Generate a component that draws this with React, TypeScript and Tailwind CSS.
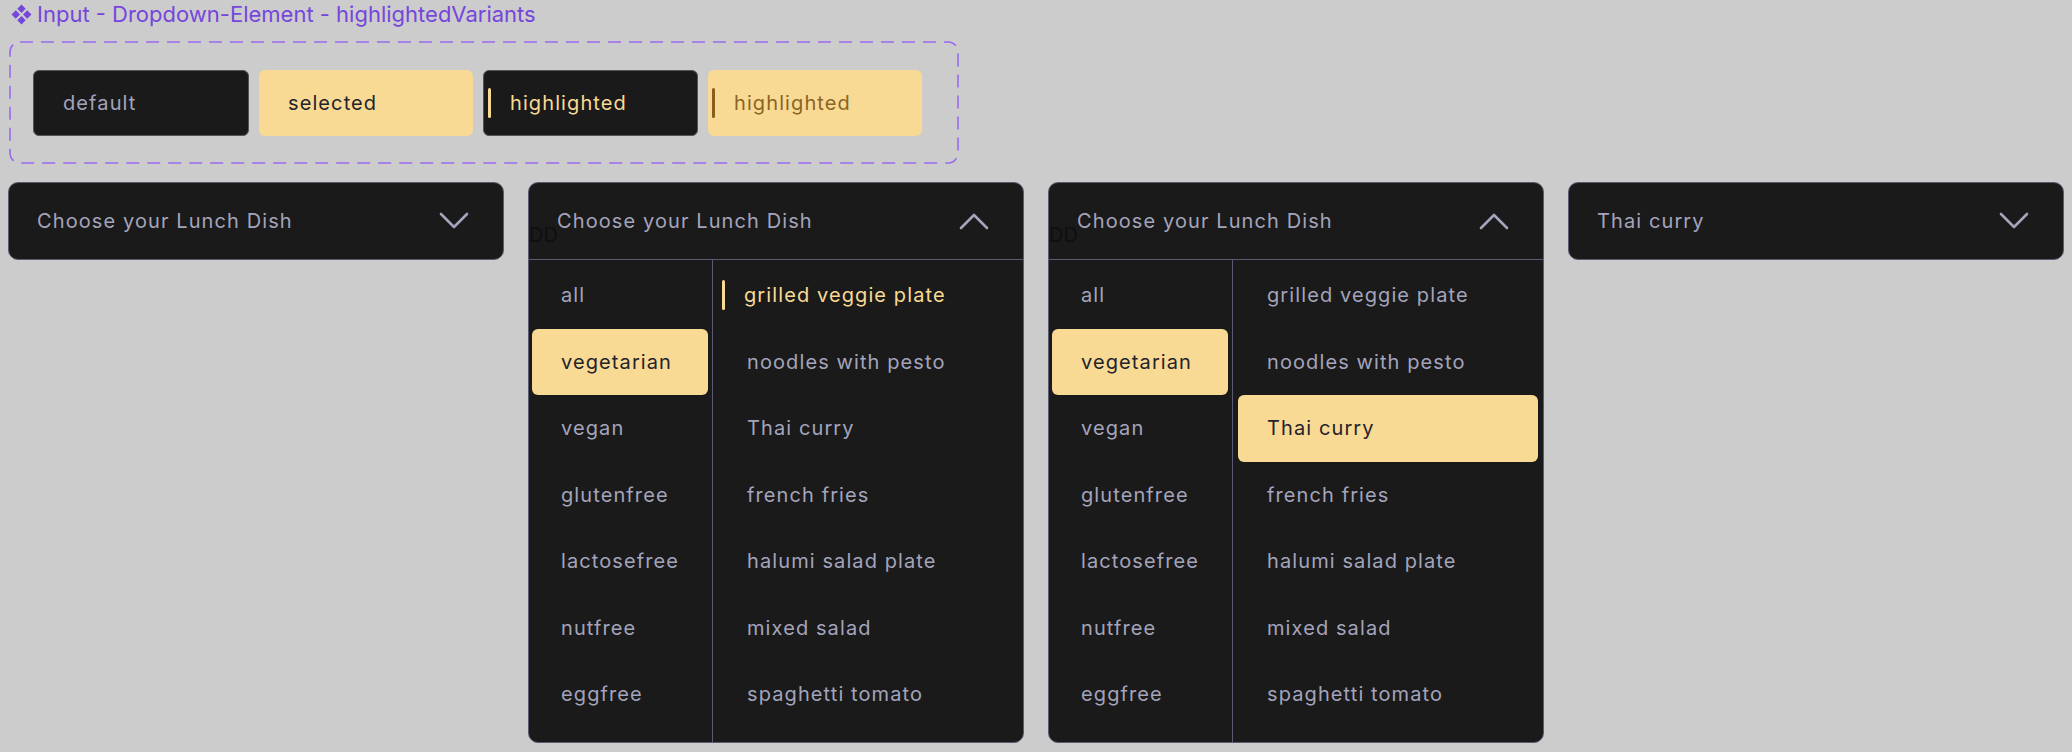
import React from 'react';

const FONT = "font-['Inter','Noto_Sans',sans-serif]";

const categories = ['all', 'vegetarian', 'vegan', 'glutenfree', 'lactosefree', 'nutfree', 'eggfree'];
const dishes = [
  'grilled veggie plate',
  'noodles with pesto',
  'Thai curry',
  'french fries',
  'halumi salad plate',
  'mixed salad',
  'spaghetti tomato',
];

type Variant = 'default' | 'selected' | 'highlighted' | 'highlightedSelected';

function Item({ label, variant, className = '' }: { label: string; variant: Variant; className?: string }) {
  if (variant === 'selected') {
    return (
      <div className={`flex items-center pl-[29px] rounded-[6px] bg-[#f9da94] text-[#23232b] ${className}`}>
        {label}
      </div>
    );
  }
  if (variant === 'highlighted') {
    return (
      <div className={`flex items-center pl-[4px] gap-[19px] text-[#f9da94] ${className}`}>
        <span className="w-[3px] h-[30px] rounded-full bg-[#f9da94]" />
        {label}
      </div>
    );
  }
  if (variant === 'highlightedSelected') {
    return (
      <div className={`flex items-center pl-[4px] gap-[19px] rounded-[6px] bg-[#f9da94] text-[#8a6424] ${className}`}>
        <span className="w-[3px] h-[30px] rounded-full bg-[#8a5e1c]" />
        {label}
      </div>
    );
  }
  return <div className={`flex items-center pl-[29px] text-[#a4a4bc] ${className}`}>{label}</div>;
}

function Chevron({ up = false }: { up?: boolean }) {
  return (
    <svg width="30" height="18" viewBox="0 0 30 18" fill="none" className="shrink-0">
      <path
        d={up ? 'M2 16 L15 3 L28 16' : 'M2 2 L15 15 L28 2'}
        stroke="#a4a4bc"
        strokeWidth="2.6"
        strokeLinecap="round"
        strokeLinejoin="round"
      />
    </svg>
  );
}

function ClosedDropdown({ value }: { value: string }) {
  return (
    <div className="w-[496px] h-[78px] flex items-center justify-between pl-[28px] pr-[34px] rounded-[10px] border border-[#5c5a72] bg-[#1a1a1a] text-[#a4a4bc]">
      <span>{value}</span>
      <Chevron />
    </div>
  );
}

function OpenDropdown({ highlightDish, selectDish }: { highlightDish?: number; selectDish?: number }) {
  return (
    <div className="relative w-[496px] rounded-[10px] border border-[#5c5a72] bg-[#1a1a1a]">
      <div className="h-[77px] flex items-center justify-between pl-[28px] pr-[34px] border-b border-[#5c5a72] text-[#a4a4bc]">
        <span>Choose your Lunch Dish</span>
        <Chevron up />
      </div>
      <span className="absolute left-0 top-[37px] text-[#0f0f0f] tracking-normal">DD</span>
      <div className="grid grid-cols-[184px_1fr]">
        <div className="border-r border-[#5c5a72] pt-[2px] pb-[14px]">
          {categories.map((c, i) => (
            <Item key={c} label={c} variant={i === 1 ? 'selected' : 'default'} className="h-[66.5px] ml-[3px] mr-[4px]" />
          ))}
        </div>
        <div className="pt-[2px] pb-[14px]">
          {dishes.map((d, i) => (
            <Item
              key={d}
              label={d}
              variant={i === highlightDish ? 'highlighted' : i === selectDish ? 'selected' : 'default'}
              className="h-[66.5px] ml-[5px] mr-[5px]"
            />
          ))}
        </div>
      </div>
    </div>
  );
}

export default function App() {
  return (
    <div className={`min-h-screen bg-[#cccccc] text-[20px] tracking-[0.055em] ${FONT}`}>
      {/* Component title */}
      <div className="flex items-center gap-[5px] pl-[11px] pt-[1px] h-[27px] text-[#7646dc] text-[22px] tracking-normal">
        <svg width="21" height="21" viewBox="0 0 18 18" fill="#7646dc">
          <path d="M9 0.5 L12.6 4.1 L9 7.7 L5.4 4.1 Z" />
          <path d="M9 10.3 L12.6 13.9 L9 17.5 L5.4 13.9 Z" />
          <path d="M4.1 5.4 L7.7 9 L4.1 12.6 L0.5 9 Z" />
          <path d="M13.9 5.4 L17.5 9 L13.9 12.6 L10.3 9 Z" />
        </svg>
        <span>Input - Dropdown-Element - highlightedVariants</span>
      </div>

      {/* Variants frame */}
      <div className="relative ml-[9px] mt-[14px] w-[950px] h-[123px] flex items-center gap-[10px] pl-[24px]">
        <svg className="absolute inset-0 pointer-events-none" width="950" height="123">
          <rect
            x="1"
            y="1"
            width="948"
            height="121"
            rx="10"
            fill="none"
            stroke="#9b6af0"
            strokeWidth="1.6"
            strokeDasharray="13 8"
          />
        </svg>
        <Item label="default" variant="default" className="h-[66px] w-[216px] rounded-[6px] bg-[#1a1a1a] border border-[#555558]" />
        <Item label="selected" variant="selected" className="h-[66px] w-[214px]" />
        <Item label="highlighted" variant="highlighted" className="h-[66px] w-[215px] rounded-[6px] bg-[#1a1a1a] border border-[#555558]" />
        <Item label="highlighted" variant="highlightedSelected" className="h-[66px] w-[214px]" />
      </div>

      {/* Dropdowns */}
      <div className="flex items-start gap-[24px] pl-[8px] mt-[18px]">
        <ClosedDropdown value="Choose your Lunch Dish" />
        <OpenDropdown highlightDish={0} />
        <OpenDropdown selectDish={2} />
        <ClosedDropdown value="Thai curry" />
      </div>
    </div>
  );
}
